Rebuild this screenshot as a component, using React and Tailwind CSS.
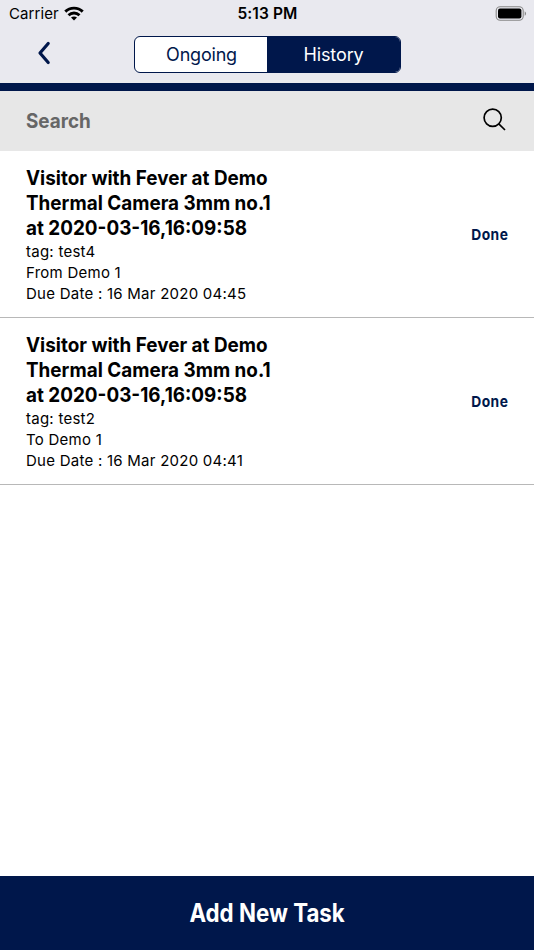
const tasks = [
  { tag: 'tag: test4', who: 'From Demo 1', due: 'Due Date : 16 Mar 2020 04:45' },
  { tag: 'tag: test2', who: 'To Demo 1', due: 'Due Date : 16 Mar 2020 04:41' },
];

function StatusBar() {
  return (
    <div className="grid h-7 grid-cols-3 items-center pl-[9px] pr-[7px] text-[15px]">
      <div className="flex items-center gap-[5px]">
        <span className="whitespace-nowrap tracking-[0.1px]">Carrier</span>
        <svg className="-mt-[2px]" width="20" height="15" viewBox="0 0 20 15" fill="none" stroke="black" strokeWidth="2.9">
          <path d="M1.3 5.6C6 .9 14 .9 18.7 5.6M4.5 9.2C7.7 6.2 12.3 6.2 15.5 9.2" />
          <path d="M10 14.5L7 11.6C8.7 10.2 11.3 10.2 13 11.6Z" fill="black" stroke="none" />
        </svg>
      </div>
      <span className="-ml-[1px] text-center text-[15.5px] font-semibold tracking-[0.1px]">5:13 PM</span>
      <svg className="-mt-[2px] justify-self-end" width="32" height="15" viewBox="0 0 32 15">
        <rect x="1.2" y=".7" width="27" height="13.6" rx="4" fill="none" stroke="#888" strokeWidth="1.1" />
        <rect x="3" y="2.6" width="23.4" height="9.8" rx="2" />
        <path d="M29.7 5.2C31.5 6 31.5 9 29.7 9.8Z" fill="#888" />
      </svg>
    </div>
  );
}

function TaskRow({ task }) {
  return (
    <li className="flex h-[167px] items-center justify-between border-b border-b-[#b8b8b8] px-[26px] pt-[2px]">
      <div className="text-[15px] leading-[21px] tracking-[0.25px]">
        <h2 className="origin-left scale-x-[0.931] whitespace-nowrap text-[20.3px] font-bold leading-[24.7px] tracking-normal">
          Visitor with Fever at Demo<br />Thermal Camera 3mm no.1<br />at 2020-03-16,16:09:58
        </h2>
        <p>{task.tag}</p>
        <p>{task.who}</p>
        <p>{task.due}</p>
      </div>
      <span className="origin-right scale-x-[0.92] text-[15px] font-bold tracking-[0.5px] text-[#00174b]">Done</span>
    </li>
  );
}

export default function App() {
  return (
    <main className="flex h-[950px] w-[534px] flex-col overflow-hidden bg-white font-['Inter',sans-serif] text-black">
      <header className="h-[91px] shrink-0 border-b-8 border-[#00174b] bg-[#e9e9ef]">
        <StatusBar />
        <div className="grid grid-cols-[134px_267px_1fr] pt-2">
          <button className="flex items-center pb-[3px] pl-[37px]">
            <svg width="14" height="24" viewBox="0 0 14 24" fill="none" stroke="#00174b" strokeWidth="3.2" strokeLinecap="round" strokeLinejoin="round">
              <path d="M11.2 2.5L3 12L11.2 21.5" />
            </svg>
          </button>
          <div className="grid h-[37px] grid-cols-[132px_1fr] overflow-hidden rounded-[6px] border border-[#00174b] bg-white text-[18px] text-[#00174b]">
            <button className="pl-px tracking-[-0.2px]">Ongoing</button>
            <button className="bg-[#00174b] tracking-[-0.1px] text-white">History</button>
          </div>
        </div>
      </header>
      <div className="flex h-[60px] shrink-0 items-center justify-between bg-[#e7e7e7] pl-[26px] pr-[28px]">
        <span className="origin-left scale-x-[0.931] text-[20.3px] font-bold text-[#666]">Search</span>
        <svg className="-mt-[3px]" width="23" height="23" viewBox="0 0 23 23" fill="none" stroke="black" strokeWidth="1.7">
          <circle cx="9.7" cy="9.7" r="8.6" />
          <path d="M15.8 15.8L22 22" />
        </svg>
      </div>
      <ul className="flex-1">
        {tasks.map((task) => <TaskRow key={task.tag} task={task} />)}
      </ul>
      <button className="h-[74px] shrink-0 bg-[#00174b] pt-[2px] text-[25px] font-bold text-white">
        <span className="inline-block scale-x-[0.892]">Add New Task</span>
      </button>
    </main>
  );
}
